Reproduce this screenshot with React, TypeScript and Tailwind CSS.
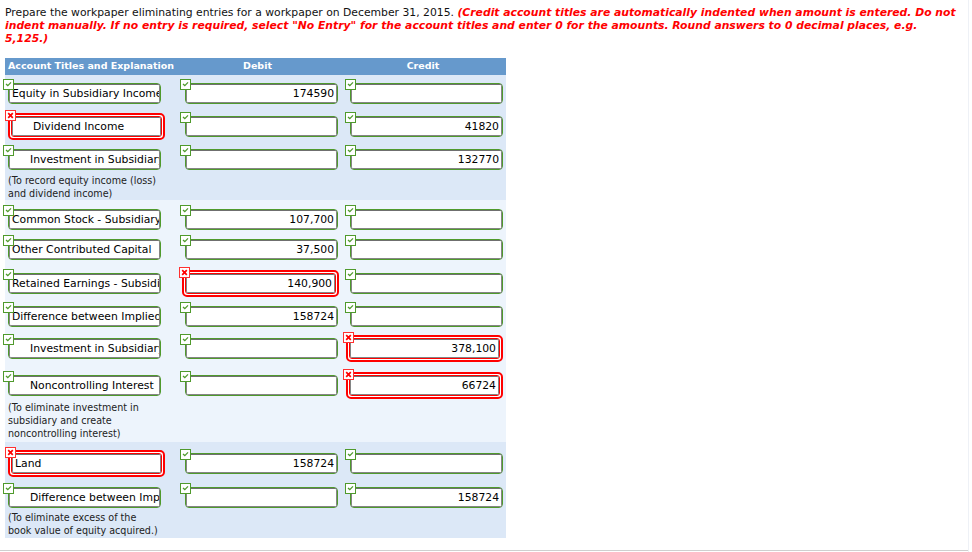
import React from "react";

type Cell = { v: string; ok: boolean; indent?: boolean };
type Row = { h: string; a: Cell; d: Cell; c: Cell };
type Group = { bg: string; pt: string; rows: Row[]; note: string[]; noteH: string };

const g = (v: string, indent = false): Cell => ({ v, ok: true, indent });
const r = (v: string, indent = false): Cell => ({ v, ok: false, indent });

const groups: Group[] = [
  {
    bg: "bg-[#dce8f7]",
    pt: "pt-0",
    rows: [
      { h: "h-[33px]", a: g("Equity in Subsidiary Income"), d: g("174590"), c: g("") },
      { h: "h-[33px]", a: r("Dividend Income", true), d: g(""), c: g("41820") },
      { h: "h-[33px]", a: g("Investment in Subsidiary", true), d: g(""), c: g("132770") },
    ],
    note: ["(To record equity income (loss)", "and dividend income)"],
    noteH: "h-[26px]",
  },
  {
    bg: "bg-[#edf4fc]",
    pt: "pt-[1px]",
    rows: [
      { h: "h-[30px]", a: g("Common Stock - Subsidiary"), d: g("107,700"), c: g("") },
      { h: "h-[34px]", a: g("Other Contributed Capital"), d: g("37,500"), c: g("") },
      { h: "h-[33px]", a: g("Retained Earnings - Subsidiary"), d: r("140,900"), c: g("") },
      { h: "h-[32px]", a: g("Difference between Implied and Book Value"), d: g("158724"), c: g("") },
      { h: "h-[37px]", a: g("Investment in Subsidiary", true), d: g(""), c: r("378,100") },
      { h: "h-[34px]", a: g("Noncontrolling Interest", true), d: g(""), c: r("66724") },
    ],
    note: ["(To eliminate investment in", "subsidiary and create", "noncontrolling interest)"],
    noteH: "h-[41px]",
  },
  {
    bg: "bg-[#dce8f7]",
    pt: "pt-[3px]",
    rows: [
      { h: "h-[34px]", a: r("Land"), d: g("158724"), c: g("") },
      { h: "h-[32px]", a: g("Difference between Implied and Book Value", true), d: g(""), c: g("158724") },
    ],
    note: ["(To eliminate excess of the", "book value of equity acquired.)"],
    noteH: "h-[27px]",
  },
];

const Mark = ({ ok }: { ok: boolean }) =>
  ok ? (
    <span className="flex h-[11px] w-[11px] justify-center border border-[#4f9a2c] bg-white">
      <svg width="7" height="6" viewBox="0 0 7 6" className="mt-[1px]">
        <path d="M1 3 L2.8 4.6 L6 1.4" stroke="#4f9a2c" strokeWidth="1.3" fill="none" />
      </svg>
    </span>
  ) : (
    <span className="flex h-[11px] w-[11px] items-center justify-center border border-[#ff3030] bg-white">
      <svg width="7" height="7" viewBox="0 0 7 7">
        <path d="M1.2 1.2 L5.8 5.8 M5.8 1.2 L1.2 5.8" stroke="#ff0000" strokeWidth="1.7" />
      </svg>
    </span>
  );

// left: margin for the green field, redLeft: margin for the red (wider) field
const Field = ({ cell, num, left, redLeft }: { cell: Cell; num?: boolean; left: string; redLeft: string }) => {
  const text = (
    <div
      className={`h-full overflow-hidden whitespace-nowrap rounded-[2px] border border-[#858585] border-t-[#6f6f6f] bg-white px-[2px] leading-[17px] text-black ${
        num ? "text-right" : "text-left"
      } ${cell.indent ? "pl-[20px]" : ""}`}
    >
      {cell.v}
    </div>
  );
  if (cell.ok) {
    return (
      <div className={`relative h-[21px] w-[153px] rounded-[4px] border border-[#4f9a2c] ${left}`}>
        <div className="absolute -left-[6px] -top-[5px]">
          <Mark ok />
        </div>
        {text}
      </div>
    );
  }
  return (
    <div className={`relative -mt-[3px] h-[27px] w-[157px] rounded-[5px] border-2 border-[#ff0000] bg-white p-px ${redLeft}`}>
      <div className="absolute -left-[5px] -top-[5px]">
        <Mark ok={false} />
      </div>
      <div className="h-full rounded-[3px] border border-[#ff0000]">{text}</div>
    </div>
  );
};

export default function App() {
  return (
    <div className="h-[552px] w-[972px] overflow-hidden bg-white font-['DejaVu_Sans',Verdana,sans-serif] text-[10.8px] text-[#111]">
      <div className="w-[969px] border-r border-[#eef1f6]">
        <p className="whitespace-nowrap px-[5px] pt-[6px] leading-[13px]">
          Prepare the workpaper eliminating entries for a workpaper on December 31, 2015.{" "}
          <b className="italic text-[#ff0000]">
            (Credit account titles are automatically indented when amount is entered. Do not
            <br />
            indent manually. If no entry is required, select "No Entry" for the account titles and enter 0 for the
            amounts. Round answers to 0 decimal places, e.g.
            <br />
            5,125.)
          </b>
        </p>

        <div className="ml-[5px] mt-[13px] w-[501px]">
          <div className="grid h-[17px] grid-cols-[170px_165px_166px] items-center bg-[#6699cc] text-[9.5px] font-bold text-white">
            <div className="pl-[3px]">Account Titles and Explanation</div>
            <div className="text-center">Debit</div>
            <div className="text-center">Credit</div>
          </div>

          {groups.map((grp, gi) => (
            <div key={gi} className={`${grp.bg} ${grp.pt}`}>
              {grp.rows.map((row, ri) => (
                <div key={ri} className={`grid grid-cols-[170px_165px_166px] items-start pt-[8px] ${row.h}`}>
                  <Field cell={row.a} left="ml-[3px]" redLeft="ml-[3px]" />
                  <Field cell={row.d} num left="ml-[10px]" redLeft="ml-[7px]" />
                  <Field cell={row.c} num left="ml-[10px]" redLeft="ml-[6px]" />
                </div>
              ))}
              <div className={`pl-[3px] text-[9.6px] leading-[13px] text-[#222] ${grp.noteH}`}>
                {grp.note.map((l, li) => (
                  <div key={li} className="whitespace-nowrap">
                    {l}
                  </div>
                ))}
              </div>
            </div>
          ))}
        </div>

        <div className="mt-[12px] h-[2px] border-t border-[#cfcfcf]" />
      </div>
    </div>
  );
}
